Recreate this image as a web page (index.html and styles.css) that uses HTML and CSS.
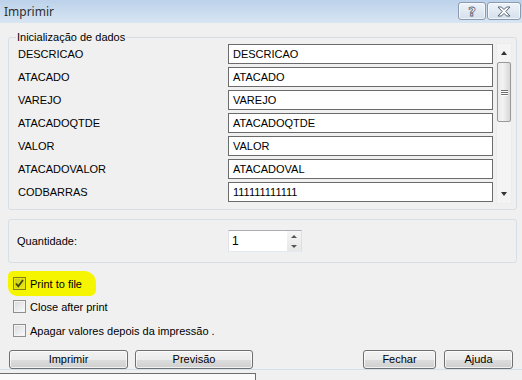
FILE: index.html
```html
<!DOCTYPE html>
<html lang="pt">
<head>
    <meta charset="UTF-8">
    <title>Imprimir</title>
    <link rel="stylesheet" href="styles.css">
</head>
<body>
    <div class="window">
        <div class="titlebar">
            <div class="title">Imprimir</div>
            <div class="caption-btn help"><span class="help-glyph">?</span></div>
            <div class="caption-btn close">
                <svg width="16" height="11" viewBox="0 0 16 11">
                    <path d="M2 1h3.5L8 3.6 10.5 1H14L9.8 5.5 14 10h-3.5L8 7.4 5.5 10H2l4.2-4.5z" fill="#fff" stroke="#57657a" stroke-width="1"/>
                </svg>
            </div>
        </div>

        <div class="main">
            <div class="group data">
                <span class="group-title">Inicialização de dados</span>
                <div class="data-body">
                    <div class="rows">
                        <div class="row"><span class="row-label">DESCRICAO</span><div class="field">DESCRICAO</div></div>
                        <div class="row"><span class="row-label">ATACADO</span><div class="field">ATACADO</div></div>
                        <div class="row"><span class="row-label">VAREJO</span><div class="field">VAREJO</div></div>
                        <div class="row"><span class="row-label">ATACADOQTDE</span><div class="field">ATACADOQTDE</div></div>
                        <div class="row"><span class="row-label">VALOR</span><div class="field">VALOR</div></div>
                        <div class="row"><span class="row-label">ATACADOVALOR</span><div class="field">ATACADOVAL</div></div>
                        <div class="row"><span class="row-label">CODBARRAS</span><div class="field">111111111111</div></div>
                    </div>
                    <div class="scrollbar">
                        <div class="sb-arrow"><span class="tri-up"></span></div>
                        <div class="sb-thumb">
                            <span class="grip"></span><span class="grip"></span><span class="grip"></span>
                        </div>
                        <div class="sb-track"></div>
                        <div class="sb-arrow"><span class="tri-down"></span></div>
                    </div>
                </div>
            </div>

            <div class="group qty">
                <span class="qty-label">Quantidade:</span>
                <div class="spin">
                    <div class="spin-value">1</div>
                    <div class="spin-btns">
                        <div class="spin-btn"><span class="tri-up small"></span></div>
                        <div class="spin-btn"><span class="tri-down small"></span></div>
                    </div>
                </div>
            </div>

            <div class="checks">
                <div class="check marked">
                    <span class="box checked">
                        <svg width="9" height="9" viewBox="0 0 9 9"><path d="M1 4.5l2.3 2.8L8 1" fill="none" stroke="#3f4a08" stroke-width="1.8"/></svg>
                    </span>
                    <span>Print to file</span>
                </div>
                <div class="check second">
                    <span class="box"></span>
                    <span>Close after print</span>
                </div>
                <div class="check third">
                    <span class="box"></span>
                    <span>Apagar valores depois da impressão .</span>
                </div>
            </div>

            <div class="actions">
                <div class="btn wide">Imprimir</div>
                <div class="btn preview">Previsão</div>
                <div class="spacer"></div>
                <div class="btn fechar">Fechar</div>
                <div class="btn ajuda">Ajuda</div>
            </div>
        </div>

        <div class="strip">
            <div class="strip-pane"></div>
        </div>
    </div>
</body>
</html>
```

FILE: styles.css
```css
body {
    margin: 0;
    background: #f0f0f0;
    font-family: "Liberation Sans", Arial, sans-serif;
    font-size: 11px;
    color: #000;
}
.window {
    width: 522px;
    height: 380px;
    display: flex;
    flex-direction: column;
    overflow: hidden;
}

/* title bar */
.titlebar {
    height: 23px;
    box-sizing: border-box;
    display: flex;
    align-items: flex-start;
    padding: 0 1px 0 4px;
    background: linear-gradient(#bcd2ea, #d8e5f3);
}
.title {
    flex: 1;
    font-family: "Noto Sans", "Open Sans", sans-serif;
    font-size: 12px;
    line-height: 23px;
    color: #2e2e2e;
}
.caption-btn {
    height: 18px;
    margin-top: 2px;
    box-sizing: border-box;
    border: 1px solid #8a9ab0;
    border-radius: 3px;
    background: linear-gradient(#eef3f9, #d5e0ec);
    box-shadow: inset 0 0 0 1px rgba(255, 255, 255, 0.6);
    display: flex;
    align-items: center;
    justify-content: center;
}
.help {
    width: 28px;
}
.close {
    width: 34px;
    margin-left: 1px;
}
.help-glyph {
    font-family: "DejaVu Sans", sans-serif;
    font-weight: bold;
    font-size: 13px;
    line-height: 13px;
    color: #fff;
    -webkit-text-stroke: 0.8px #57657a;
}

/* content */
.main {
    padding: 14px 5px 0 8px;
}
.group {
    position: relative;
    border: 1px solid #d5dfe5;
    border-radius: 3px;
}
.group-title {
    position: absolute;
    top: -7px;
    left: 7px;
    padding: 0 1px;
    line-height: 13px;
    background: #f0f0f0;
}
.data-body {
    display: flex;
    height: 171px;
    box-sizing: border-box;
    padding: 6px 4px 0 9px;
}
.rows {
    display: flex;
    flex-direction: column;
    gap: 3px;
}
.row {
    display: flex;
    align-items: center;
    height: 20px;
}
.row-label {
    width: 210px;
}
.field {
    width: 265px;
    height: 20px;
    box-sizing: border-box;
    border: 1px solid #6b6b6b;
    background: #fff;
    padding-left: 4px;
    line-height: 18px;
}

/* scrollbar */
.scrollbar {
    width: 16px;
    height: 161px;
    margin: -1px 0 0 3px;
    box-sizing: border-box;
    display: flex;
    flex-direction: column;
    background: #f4f4f4;
    border: 1px solid #ececec;
}
.sb-arrow {
    height: 18px;
    display: flex;
    align-items: center;
    justify-content: center;
}
.sb-thumb {
    height: 60px;
    box-sizing: border-box;
    border: 1px solid #999;
    border-radius: 2px;
    background: linear-gradient(to right, #eaeaea, #f3f3f3 40%, #d7d7d7);
    display: flex;
    flex-direction: column;
    align-items: center;
    justify-content: center;
    gap: 1px;
}
.grip {
    width: 7px;
    height: 1px;
    background: #6f6f6f;
    box-shadow: 0 1px 0 #fff;
}
.sb-track {
    flex: 1;
}
.tri-up, .tri-down {
    width: 0;
    height: 0;
    border-left: 3.5px solid transparent;
    border-right: 3.5px solid transparent;
}
.tri-up {
    border-bottom: 4px solid #333;
}
.tri-down {
    border-top: 4px solid #333;
}
.tri-up.small {
    border-bottom-color: #555;
    border-bottom-width: 3px;
}
.tri-down.small {
    border-top-color: #555;
    border-top-width: 3px;
}

/* quantity */
.qty {
    margin-top: 9px;
    height: 44px;
    box-sizing: border-box;
    display: flex;
    align-items: flex-start;
    padding: 10px 0 0 8px;
}
.qty-label {
    width: 211px;
    line-height: 22px;
}
.spin {
    width: 74px;
    height: 22px;
    box-sizing: border-box;
    display: flex;
    border: 1px solid;
    border-color: #abadb3 #dbdfe6 #e3e9ef #e2e3ea;
    background: #fff;
}
.spin-value {
    flex: 1;
    padding-left: 3px;
    font-size: 12px;
    line-height: 20px;
}
.spin-btns {
    width: 14px;
    display: flex;
    flex-direction: column;
    background: linear-gradient(#f6f6f6, #e7e7e7);
}
.spin-btn {
    flex: 1;
    display: flex;
    align-items: center;
    justify-content: center;
}

/* checkboxes */
.checks {
    margin-top: 8px;
    display: flex;
    flex-direction: column;
    align-items: flex-start;
}
.check {
    display: flex;
    align-items: center;
    gap: 4px;
    height: 23px;
    padding: 0 5px;
}
.check.marked {
    height: 25px;
    padding-right: 14px;
    background: #f5f500;
    border-radius: 5px 12px 6px 9px;
}
.check.second {
    height: 21px;
}
.check.third {
    margin-top: 2px;
}
.box {
    width: 13px;
    height: 13px;
    box-sizing: border-box;
    border: 1px solid #8e8f8f;
    background: linear-gradient(135deg, #d6d9dd, #fbfbfb);
    box-shadow: inset 0 0 0 1px #f4f4f4;
    display: flex;
    align-items: center;
    justify-content: center;
}
.box.checked {
    border-color: #80801c;
    background: linear-gradient(135deg, #c9c92a, #ecec10);
    box-shadow: inset 0 0 0 1px #e8e80a;
}

/* buttons */
.actions {
    display: flex;
    margin-top: 8px;
    padding: 0 4px 0 1px;
}
.btn {
    height: 19px;
    box-sizing: border-box;
    border: 1px solid #707070;
    border-radius: 3px;
    background: linear-gradient(#f2f2f2, #ebebeb 50%, #dddddd 50%, #cfcfcf);
    box-shadow: inset 0 0 0 1px rgba(255, 255, 255, 0.7);
    text-align: center;
    line-height: 17px;
}
.wide {
    width: 119px;
}
.preview {
    width: 118px;
    margin-left: 7px;
}
.fechar {
    width: 73px;
}
.ajuda {
    width: 69px;
    margin-left: 8px;
}
.spacer {
    flex: 1;
}

/* bottom edge */
.strip {
    margin-top: auto;
    height: 11px;
    box-sizing: border-box;
    border-top: 1px solid #d3e0ed;
}
.strip-pane {
    width: 256px;
    height: 10px;
    margin-top: 3px;
    box-sizing: border-box;
    border-top: 1px solid #6d6d6d;
    border-right: 1px solid #6d6d6d;
    background: #fafafa;
}
```
